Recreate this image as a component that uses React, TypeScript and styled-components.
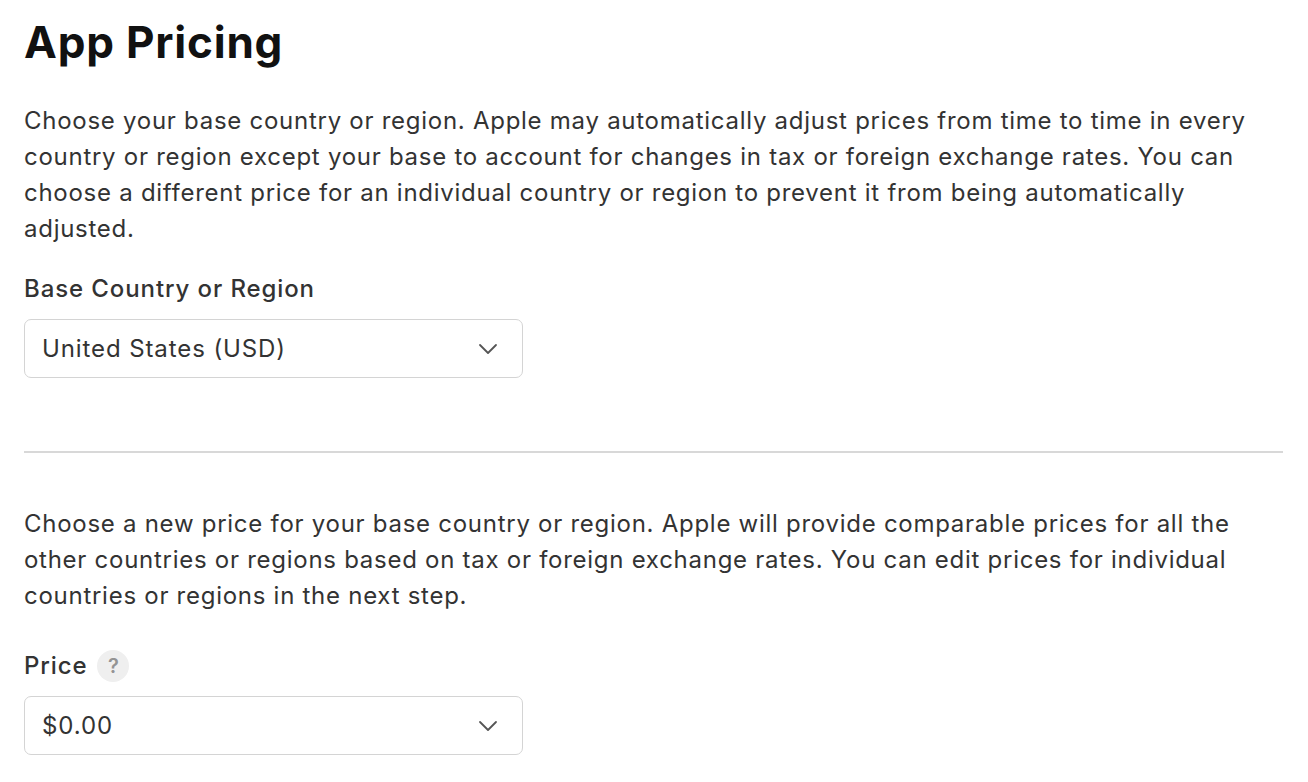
import React from "react";
import styled, { createGlobalStyle } from "styled-components";

const Global = createGlobalStyle`
  html, body { margin: 0; padding: 0; background: #fff; }
  body { font-family: Inter, "Noto Sans", "Liberation Sans", sans-serif; color: #333; -webkit-font-smoothing: antialiased; }
`;

const Page = styled.main`
  padding: 14px 25px 0 24px;
  display: flex;
  flex-direction: column;
`;

const Title = styled.h1`
  margin: 0;
  font-size: 44px;
  line-height: 56px;
  font-weight: 700;
  color: #111;
  letter-spacing: 0.8px;
`;

const Paragraph = styled.p<{ $top: number }>`
  margin: ${(p) => p.$top}px 0 0;
  font-size: 24px;
  line-height: 36px;
  color: #333;
  letter-spacing: 0.73px;
`;

const FieldLabel = styled.div<{ $top: number }>`
  margin-top: ${(p) => p.$top}px;
  display: flex;
  align-items: center;
  gap: 10px;
  font-size: 24px;
  line-height: 32px;
  font-weight: 500;
  color: #333;
  letter-spacing: 0.9px;
`;

const Help = styled.span`
  width: 32px;
  height: 32px;
  border-radius: 50%;
  background: #efefef;
  color: #949494;
  font-size: 20px;
  font-weight: 600;
  letter-spacing: 0;
  display: inline-flex;
  align-items: center;
  justify-content: center;
`;

const Select = styled.div`
  margin-top: 14px;
  width: 499px;
  height: 59px;
  box-sizing: border-box;
  border: 1.5px solid #d4d4d4;
  border-radius: 7px;
  display: flex;
  align-items: center;
  justify-content: space-between;
  padding: 0 24px 0 17px;
  font-size: 24px;
  letter-spacing: 0.9px;
  color: #333;
`;

const Divider = styled.hr`
  margin: 73px 0 0;
  border: 0;
  height: 2px;
  background: #d8d8d8;
`;

const Chevron = () => (
  <svg width="20" height="12" viewBox="0 0 20 12" fill="none">
    <path d="M2 2l8 8 8-8" stroke="#555" strokeWidth="1.8" strokeLinecap="round" strokeLinejoin="round" />
  </svg>
);

export default function App() {
  return (
    <Page>
      <Global />
      <Title>App Pricing</Title>
      <Paragraph $top={33}>
        Choose your base country or region. Apple may automatically adjust prices from time to time in every
        <br />
        country or region except your base to account for changes in tax or foreign exchange rates. You can
        <br />
        choose a different price for an individual country or region to prevent it from being automatically
        <br />
        adjusted.
      </Paragraph>
      <FieldLabel $top={26}>Base Country or Region</FieldLabel>
      <Select>
        <span>United States (USD)</span>
        <Chevron />
      </Select>
      <Divider />
      <Paragraph $top={53}>
        Choose a new price for your base country or region. Apple will provide comparable prices for all the
        <br />
        other countries or regions based on tax or foreign exchange rates. You can edit prices for individual
        <br />
        countries or regions in the next step.
      </Paragraph>
      <FieldLabel $top={36}>
        Price <Help>?</Help>
      </FieldLabel>
      <Select>
        <span>$0.00</span>
        <Chevron />
      </Select>
    </Page>
  );
}
